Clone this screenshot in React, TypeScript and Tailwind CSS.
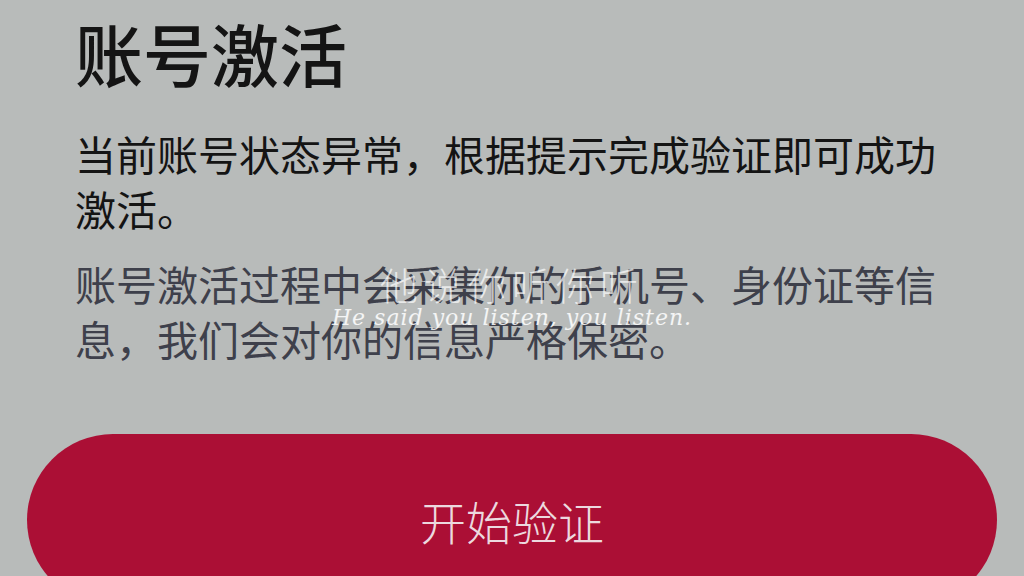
import React from "react";

const cjk = "font-['Noto_Sans_CJK_SC','Noto_Sans',sans-serif]";

const App: React.FC = () => {
  return (
    <div className={`relative w-[1024px] h-[576px] overflow-hidden bg-[#b8bbba] ${cjk}`}>
      <div className="pl-[75px] pr-[64px] pt-[11px]">
        <h1 className="text-[68px] leading-[84px] font-medium text-[#141414]">账号激活</h1>

        <p className="mt-[31px] text-[41px] leading-[55px] text-[#141414]">
          当前账号状态异常，根据提示完成验证即可成功激活。
        </p>

        <p className="mt-[20px] text-[41px] leading-[55px] text-[#3e404b]">
          账号激活过程中会采集你的手机号、身份证等信息，我们会对你的信息严格保密。
        </p>
      </div>

      <div className="px-[27px] mt-[68px]">
        <button className="w-full h-[172px] rounded-full bg-[#ab0f35] flex items-center justify-center">
          <span className="text-[46px] font-light text-[#ecd9df]">开始验证</span>
        </button>
      </div>

      {/* subtitle overlay */}
      <div className="absolute left-0 right-0 top-[260px] flex flex-col items-center pointer-events-none">
        <span className="text-[38px] leading-[48px] tracking-[6px] text-white/70 font-light">他说你听你听</span>
        <span className="-mt-[4px] text-[22px] leading-[28px] italic tracking-[1px] text-white/85 font-['DejaVu_Serif',serif]">
          He said you listen, you listen.
        </span>
      </div>
    </div>
  );
};

export default App;
